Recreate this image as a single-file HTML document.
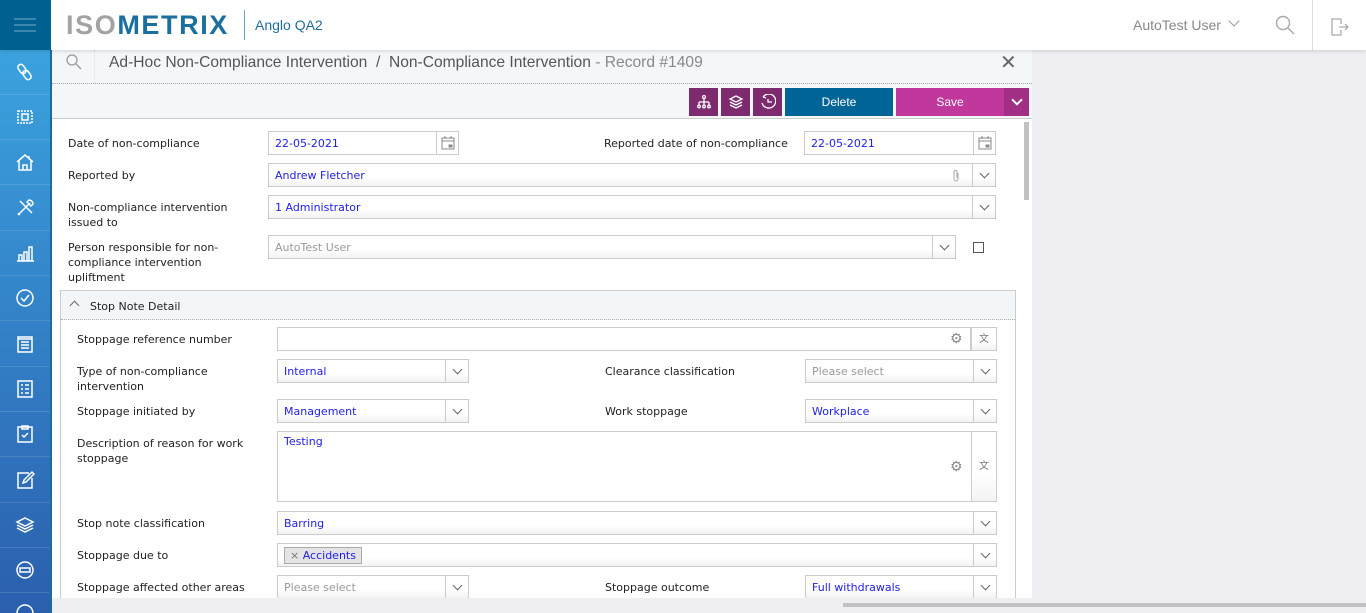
<!DOCTYPE html>
<html><head><meta charset="utf-8"><style>
*{box-sizing:border-box;margin:0;padding:0}
html,body{overflow:hidden}
body{width:1366px;height:613px;overflow:hidden;background:#eeeef3;font-family:"DejaVu Sans",Verdana,sans-serif;font-size:11px;color:#222;position:relative}
#wrap{position:absolute;left:0;top:0;width:1366px;height:613px;overflow:hidden}
.abs{position:absolute}
#top{left:0;top:0;width:1366px;height:50px;background:#fff;box-shadow:0 1px 4px rgba(0,0,0,.15);z-index:3}
#ham{left:0;top:0;width:51px;height:50px;background:#00608f}
#ham i{position:absolute;left:14px;width:22px;height:2px;background:#3b86ad}
#side{left:0;top:50px;width:52px;height:563px;overflow:hidden;background:linear-gradient(#3ba2de,#2b5fae);border-right:2px solid #1d6aa3}
.si{position:absolute;left:0;width:50px;height:45px;border-bottom:1px solid rgba(255,255,255,.12);display:flex;align-items:center;justify-content:center}
.si svg{width:20px;height:20px;fill:none;stroke:#fff;stroke-width:1.5}
#panel{left:52px;top:50px;width:980px;height:548px;background:#fff}
#hdr{left:0;top:0;width:980px;height:34px;background:#f4f7fa;border-bottom:1px dotted #aaa}
#tb{left:0;top:34px;width:980px;height:35px;background:#f4f7fa;border-bottom:1px solid #ccc}
.lbl{position:absolute;font-size:11px;line-height:15px;color:#222}
.in{position:absolute;height:24px;border:1px solid #ccc;background:linear-gradient(#fff 60%,#f3f3f3);font-size:11px;line-height:23px;padding-left:6px;color:#2020e8}
.in.w{background:#fff}
.dd{position:absolute;top:-1px;right:-1px;width:24px;height:24px;border:1px solid #ccc;display:flex;align-items:center;justify-content:center}
.dd:after{content:"";width:6px;height:6px;border-right:1px solid #666;border-bottom:1px solid #666;transform:rotate(45deg);margin-top:-4px}
.dd svg{position:absolute;left:4px;top:4px}
.dd.c:after{display:none}
.btn{position:absolute;top:38px;height:28px;color:#fff;font-family:"Liberation Sans",sans-serif;font-size:12px;display:flex;align-items:center;justify-content:center}
.ic{background:#7d2a6e;width:29px}
.ic svg{width:16px;height:16px;fill:none;stroke:#fff;stroke-width:1.3}
</style></head><body><div id="wrap">
<div id="top" class="abs">
 <div id="ham" class="abs"><i style="top:18px"></i><i style="top:24px"></i><i style="top:30px"></i></div>
 <div class="abs" style="left:66px;top:11px;font-family:'Liberation Sans',sans-serif;font-weight:bold;font-size:27px;letter-spacing:1.6px;line-height:28px"><span style="color:#a3a3a3">ISO</span><span style="color:#1a6f9e">METRIX</span></div>
 <div class="abs" style="left:244px;top:10px;width:1px;height:30px;background:#6aa3c4"></div>
 <div class="abs" style="left:255px;top:17px;font-family:'Liberation Sans',sans-serif;font-size:14px;color:#1f6d9c">Anglo QA2</div>
 <div class="abs" style="left:1133px;top:17px;font-family:'Liberation Sans',sans-serif;font-size:14px;color:#888">AutoTest User</div>
 <div class="abs" style="left:1230px;top:17px;width:8px;height:8px;border-right:1px solid #999;border-bottom:1px solid #999;transform:rotate(45deg)"></div>
 <svg class="abs" style="left:1274px;top:14px" width="22" height="22" fill="none" stroke="#aaa" stroke-width="1.4"><circle cx="9" cy="9" r="6.5"/><path d="M14 14l6 6"/></svg>
 <div class="abs" style="left:1312px;top:0;width:1px;height:50px;background:#ddd"></div>
 <svg class="abs" style="left:1329px;top:15px" width="22" height="22" fill="none" stroke="#aaa" stroke-width="1.3"><path d="M12 4H3v16h9v-5M12 9V4M10 12h9M16 9l3 3-3 3"/></svg>
</div>
<div id="side" class="abs">
 <div class="si" style="top:0"><svg viewBox="0 0 20 20"><rect x="4" y="2" width="6" height="10" rx="3" transform="rotate(-35 7 7)"/><rect x="9" y="8" width="6" height="10" rx="3" transform="rotate(-35 12 13)"/></svg></div>
 <div class="si" style="top:45px"><svg viewBox="0 0 20 20"><rect x="3" y="4" width="14" height="12" stroke-dasharray="2 1"/><rect x="7" y="7" width="6" height="6"/></svg></div>
 <div class="si" style="top:90px"><svg viewBox="0 0 20 20"><path d="M2 10l8-7 8 7M4 9v9h12V9M8 18v-5h4v5M14 4v3"/></svg></div>
 <div class="si" style="top:136px"><svg viewBox="0 0 20 20"><path d="M3 17L15 5M5 3l12 12M14 2a4 4 0 0 1 4 4l-2 2-4-4zM3 15l2 2"/></svg></div>
 <div class="si" style="top:181px"><svg viewBox="0 0 20 20"><path d="M2 18h17M4 18v-6h3v6M9 18V9h3v9M14 18V4h3v14"/></svg></div>
 <div class="si" style="top:226px"><svg viewBox="0 0 20 20"><circle cx="10" cy="10" r="8"/><path d="M6 10l3 3 5-6"/></svg></div>
 <div class="si" style="top:272px"><svg viewBox="0 0 20 20"><rect x="3" y="3" width="14" height="15"/><path d="M6 8h8M6 11h8M6 14h8M3 5h14"/></svg></div>
 <div class="si" style="top:317px"><svg viewBox="0 0 20 20"><rect x="3" y="2" width="14" height="16"/><path d="M6 6h2M10 6h4M6 10h2M10 10h4M6 14h2M10 14h4"/></svg></div>
 <div class="si" style="top:362px"><svg viewBox="0 0 20 20"><rect x="3" y="3" width="14" height="15"/><path d="M7 2h6v3H7zM7 11l2 2 4-4"/></svg></div>
 <div class="si" style="top:408px"><svg viewBox="0 0 20 20"><path d="M14 3H3v15h14V8M8 13l1-3 8-8 2 2-8 8z"/></svg></div>
 <div class="si" style="top:453px"><svg viewBox="0 0 20 20"><path d="M10 3l8 4-8 4-8-4zM2 10l8 4 8-4M2 13l8 4 8-4"/></svg></div>
 <div class="si" style="top:498px"><svg viewBox="0 0 20 20"><circle cx="10" cy="10" r="8"/><rect x="5" y="8" width="10" height="4"/></svg></div>
 <div class="si" style="top:543px;border:0;align-items:flex-start;padding-top:10px"><svg viewBox="0 0 20 20"><circle cx="10" cy="10" r="8"/></svg></div>
</div>
<div id="panel" class="abs">
 <div id="hdr" class="abs">
  <svg class="abs" style="left:13px;top:3px" width="18" height="18" fill="none" stroke="#999" stroke-width="1.3"><circle cx="7" cy="7" r="5"/><path d="M11 11l5 5"/></svg>
  <div class="abs" style="left:42px;top:0;width:1px;height:34px;border-left:1px dotted #ddd"></div>
  <div class="abs" style="left:57px;top:4px;font-family:'Liberation Sans',sans-serif;font-size:15.6px;color:#555">Ad-Hoc Non-Compliance Intervention &nbsp;/&nbsp; Non-Compliance Intervention <span style="color:#888">- Record #1409</span></div>
  <div class="abs" style="left:948px;top:0px;font-family:'Liberation Sans',sans-serif;font-size:20px;color:#666">✕</div>
 </div>
 <div id="tb" class="abs"></div>
 <div class="btn ic" style="left:637px"><svg viewBox="0 0 16 16"><circle cx="8" cy="3" r="1.5"/><path d="M8 5v3M3 8h10M3 8v3M8 8v3M13 8v3"/><circle cx="3" cy="12.5" r="1.3"/><circle cx="8" cy="12.5" r="1.3"/><circle cx="13" cy="12.5" r="1.3"/></svg></div>
 <div class="btn ic" style="left:669px"><svg viewBox="0 0 16 16"><path d="M8 2l6 3-6 3-6-3zM2 8l6 3 6-3M2 11l6 3 6-3"/></svg></div>
 <div class="btn ic" style="left:701px"><svg viewBox="0 0 16 16"><path d="M3 3a7 7 0 1 1-1 6M3 3l3 1M8 5v3h4"/></svg></div>
 <div class="btn" style="left:733px;width:108px;background:#006496">Delete</div>
 <div class="btn" style="left:844px;width:108px;background:#c0389c">Save</div>
 <div class="btn" style="left:952px;width:25px;background:#a12f86"><span style="width:8px;height:8px;border-right:2px solid #fff;border-bottom:2px solid #fff;transform:rotate(45deg);margin-top:-5px"></span></div>
 <div class="abs" style="left:972px;top:72px;width:5px;height:78px;background:#c1c1c1"></div>
</div>
<div class="lbl" style="left:68px;top:136px">Date of non-compliance</div>
<div class="in w" style="left:268px;top:131px;width:191px">22-05-2021<div class="dd c" style="background:#fff;width:23px"><svg width="14" height="14" fill="none" stroke="#888"><rect x="1" y="2" width="12" height="11"/><path d="M1 5h12M4 0v3M10 0v3"/><rect x="8" y="9" width="3" height="2" fill="#888"/></svg></div></div>
<div class="lbl" style="left:604px;top:136px">Reported date of non-compliance</div>
<div class="in w" style="left:804px;top:131px;width:192px">22-05-2021<div class="dd c" style="background:#fff;width:23px"><svg width="14" height="14" fill="none" stroke="#888"><rect x="1" y="2" width="12" height="11"/><path d="M1 5h12M4 0v3M10 0v3"/><rect x="8" y="9" width="3" height="2" fill="#888"/></svg></div></div>
<div class="lbl" style="left:68px;top:168px">Reported by</div>
<div class="in" style="left:268px;top:163px;width:728px">Andrew Fletcher<svg class="abs" style="left:682px;top:5px" width="10" height="13" fill="none" stroke="#aaa"><path d="M7 4v6a2 2 0 0 1-4 0V3a1.5 1.5 0 0 1 3 0v6"/></svg><div class="dd"></div></div>
<div class="lbl" style="left:68px;top:200px">Non-compliance intervention<br>issued to</div>
<div class="in" style="left:268px;top:195px;width:728px">1 Administrator<div class="dd"></div></div>
<div class="lbl" style="left:68px;top:240px">Person responsible for non-<br>compliance intervention<br>upliftment</div>
<div class="in" style="left:268px;top:235px;width:688px;color:#999">AutoTest User<div class="dd"></div></div>
<div class="abs" style="left:973px;top:242px;width:11px;height:11px;border:1px solid #555;background:#fff"></div>
<div class="abs" style="left:60px;top:290px;width:956px;height:310px;border:1px solid #ccc;border-bottom:0"></div>
<div class="abs" style="left:61px;top:291px;width:954px;height:29px;background:#f3f6f9;border-bottom:1px dotted #aaa"></div>
<div class="abs" style="left:71px;top:302px;width:7px;height:7px;border-left:1px solid #666;border-top:1px solid #666;transform:rotate(45deg)"></div>
<div class="lbl" style="left:90px;top:299px">Stop Note Detail</div>
<div class="lbl" style="left:77px;top:332px">Stoppage reference number</div>
<div class="in w" style="left:277px;top:327px;width:694px"><span class="abs" style="left:672px;top:0;color:#888;font-size:14px">⚙</span></div>
<div class="in" style="left:971px;top:327px;width:26px;color:#777;padding:0;text-align:center;font-size:10px">文</div>
<div class="lbl" style="left:77px;top:364px">Type of non-compliance<br>intervention</div>
<div class="in" style="left:277px;top:359px;width:192px">Internal<div class="dd"></div></div>
<div class="lbl" style="left:605px;top:364px">Clearance classification</div>
<div class="in" style="left:805px;top:359px;width:192px;color:#999">Please select<div class="dd"></div></div>
<div class="lbl" style="left:77px;top:404px">Stoppage initiated by</div>
<div class="in" style="left:277px;top:399px;width:192px">Management<div class="dd"></div></div>
<div class="lbl" style="left:605px;top:404px">Work stoppage</div>
<div class="in" style="left:805px;top:399px;width:192px">Workplace<div class="dd"></div></div>
<div class="lbl" style="left:77px;top:436px">Description of reason for work<br>stoppage</div>
<div class="in w" style="left:277px;top:431px;width:695px;height:71px;line-height:20px">Testing<span class="abs" style="left:672px;top:25px;color:#888;font-size:14px">⚙</span></div>
<div class="in" style="left:971px;top:431px;width:26px;height:71px;color:#777;padding:0;text-align:center;line-height:70px;font-size:10px">文</div>
<div class="lbl" style="left:77px;top:516px">Stop note classification</div>
<div class="in" style="left:277px;top:511px;width:720px">Barring<div class="dd"></div></div>
<div class="lbl" style="left:77px;top:548px">Stoppage due to</div>
<div class="in" style="left:277px;top:543px;width:720px"><span class="abs" style="left:6px;top:3px;height:17px;line-height:15px;padding:0 5px;border:1px solid #aaa;background:#e4e4e4;color:#2020e8"><span style="color:#777">× </span>Accidents</span><div class="dd"></div></div>
<div class="lbl" style="left:77px;top:580px">Stoppage affected other areas</div>
<div class="in" style="left:277px;top:575px;width:192px;color:#999">Please select<div class="dd"></div></div>
<div class="lbl" style="left:605px;top:580px">Stoppage outcome</div>
<div class="in" style="left:805px;top:575px;width:192px">Full withdrawals<div class="dd"></div></div>
<div class="abs" style="left:52px;top:598px;width:1314px;height:15px;background:#eeeef3"></div>
<div class="abs" style="left:843px;top:603px;width:523px;height:4px;background:#c1c1c1"></div>
</div></body></html>
